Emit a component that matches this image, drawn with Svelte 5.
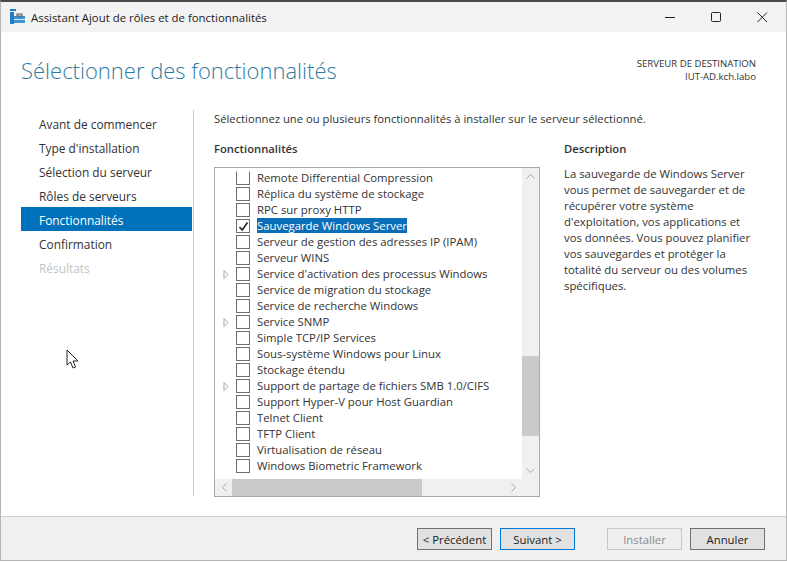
<script>
  const steps = [
    { label: "Avant de commencer" },
    { label: "Type d'installation" },
    { label: "Sélection du serveur" },
    { label: "Rôles de serveurs" },
    { label: "Fonctionnalités", active: true },
    { label: "Confirmation" },
    { label: "Résultats", disabled: true }
  ];
  const features = [
    { name: "Remote Differential Compression" },
    { name: "Réplica du système de stockage" },
    { name: "RPC sur proxy HTTP" },
    { name: "Sauvegarde Windows Server", checked: true, selected: true },
    { name: "Serveur de gestion des adresses IP (IPAM)" },
    { name: "Serveur WINS" },
    { name: "Service d'activation des processus Windows", expand: true },
    { name: "Service de migration du stockage" },
    { name: "Service de recherche Windows" },
    { name: "Service SNMP", expand: true },
    { name: "Simple TCP/IP Services" },
    { name: "Sous-système Windows pour Linux" },
    { name: "Stockage étendu" },
    { name: "Support de partage de fichiers SMB 1.0/CIFS", expand: true },
    { name: "Support Hyper-V pour Host Guardian" },
    { name: "Telnet Client" },
    { name: "TFTP Client" },
    { name: "Virtualisation de réseau" },
    { name: "Windows Biometric Framework" }
  ];
</script>

<div class="window">
  <header class="titlebar">
    <svg class="app-icon" width="16" height="16" viewBox="0 0 16 16">
      <rect x="0" y="0" width="6" height="2" fill="#1f7fc4" />
      <rect x="0" y="3" width="4" height="12" fill="#1f7fc4" />
      <rect x="4" y="7" width="11" height="7" fill="#3d94cf" />
      <rect x="7" y="5" width="5" height="2" fill="none" stroke="#4a5a68" />
      <rect x="4" y="10" width="11" height="1" fill="#d8e8f2" />
    </svg>
    <span class="title">Assistant Ajout de rôles et de fonctionnalités</span>
    <div class="controls">
      <svg width="11" height="11" viewBox="0 0 11 11"><path d="M0 5.5H10" stroke="#222" fill="none" /></svg>
      <svg width="11" height="11" viewBox="0 0 11 11"><rect x="0.5" y="0.5" width="9" height="9" rx="1" stroke="#222" fill="none" /></svg>
      <svg width="11" height="11" viewBox="0 0 11 11"><path d="M0.5 0.5L10 10M10 0.5L0.5 10" stroke="#222" fill="none" /></svg>
    </div>
  </header>

  <div class="head">
    <h1>Sélectionner des fonctionnalités</h1>
    <div class="dest">
      <div>SERVEUR DE DESTINATION</div>
      <div>IUT-AD.kch.labo</div>
    </div>
  </div>

  <div class="body">
    <nav class="steps">
      {#each steps as s}
        <div class="step" class:active={s.active} class:disabled={s.disabled}>{s.label}</div>
      {/each}
    </nav>
    <main class="content">
      <p class="intro">Sélectionnez une ou plusieurs fonctionnalités à installer sur le serveur sélectionné.</p>
      <div class="columns">
        <section class="left">
          <h2>Fonctionnalités</h2>
          <div class="listbox">
            <div class="list-row">
              <div class="items">
                {#each features as f, i}
                  <div class="item" class:first={i === 0}>
                    <span class="arrow">
                      {#if f.expand}
                        <svg width="7" height="9" viewBox="0 0 7 9"><path d="M2 .5L6 4.5L2 8.5Z" fill="none" stroke="#a6a6a6" /></svg>
                      {/if}
                    </span>
                    <span class="check">
                      {#if f.checked}
                        <svg width="11" height="11" viewBox="0 0 11 11"><path d="M1.5 6L4.2 9L9.5 1.5" fill="none" stroke="#222" stroke-width="1.6" /></svg>
                      {/if}
                    </span>
                    <span class="name" class:selected={f.selected}>{f.name}</span>
                  </div>
                {/each}
              </div>
              <div class="vscroll">
                <svg class="up" width="9" height="5" viewBox="0 0 9 5"><path d="M.5 4.5L4.5 .5L8.5 4.5" fill="none" stroke="#a8a8a8" /></svg>
                <div class="vthumb"></div>
                <svg class="down" width="9" height="5" viewBox="0 0 9 5"><path d="M.5 .5L4.5 4.5L8.5 .5" fill="none" stroke="#a8a8a8" /></svg>
              </div>
            </div>
            <div class="hscroll">
              <svg width="5" height="9" viewBox="0 0 5 9"><path d="M4.5 .5L.5 4.5L4.5 8.5" fill="none" stroke="#a8a8a8" /></svg>
              <div class="htrack"><div class="hthumb"></div></div>
              <svg width="5" height="9" viewBox="0 0 5 9"><path d="M.5 .5L4.5 4.5L.5 8.5" fill="none" stroke="#a8a8a8" /></svg>
            </div>
          </div>
        </section>
        <aside class="desc">
          <h2>Description</h2>
          <p>La sauvegarde de Windows Server vous permet de sauvegarder et de récupérer votre système d'exploitation, vos applications et vos données. Vous pouvez planifier vos sauvegardes et protéger la totalité du serveur ou des volumes spécifiques.</p>
        </aside>
      </div>
    </main>
  </div>

  <footer class="footer">
    <button class="dark">&lt; Précédent</button>
    <button class="primary">Suivant &gt;</button>
    <button class="off" disabled>Installer</button>
    <button class="dark">Annuler</button>
  </footer>
</div>

<!-- mouse pointer caught in the capture -->
<svg class="cursor" width="14" height="21" viewBox="0 0 14 21">
  <path d="M1 1V16L4.5 13L7 19L9.5 18L7 12H12Z" fill="#fff" stroke="#222" stroke-width="1" />
</svg>

<style>
  :global(body) {
    margin: 0;
    background: #fff;
  }
  .window {
    width: 787px;
    height: 561px;
    box-sizing: border-box;
    border-top: 2px solid #4a4a4a;
    border-left: 1px solid #b5b5b5;
    border-right: 1px solid #b5b5b5;
    border-bottom: 1px solid #b5b5b5;
    background: #fff;
    display: flex;
    flex-direction: column;
    font-family: "Open Sans", "Noto Sans", sans-serif;
    font-size: 11.35px;
    color: #333;
    overflow: hidden;
  }
  .titlebar {
    height: 30px;
    background: #f3f3f3;
    display: flex;
    align-items: center;
    padding-left: 9px;
    flex: none;
  }
  .title {
    margin-left: 5px;
    color: #222;
    font-size: 11.4px;
  }
  .controls {
    margin-left: auto;
    display: flex;
    gap: 35px;
    padding-right: 18px;
  }
  .head {
    height: 78px;
    flex: none;
    display: flex;
    justify-content: space-between;
    padding: 0 30px 0 20px;
  }
  h1 {
    margin: 23px 0 0;
    font-weight: 300;
    font-size: 22px;
    line-height: 30px;
    color: #2e7d9f;
  }
  .dest {
    margin-top: 25px;
    text-align: right;
    font-size: 9.6px;
    line-height: 13px;
    color: #333;
  }
  .body {
    flex: 1;
    display: flex;
    min-height: 0;
  }
  .steps {
    width: 171px;
    margin-left: 20px;
    padding-top: 1px;
    margin-right: 1px;
    flex: none;
    font-size: 11.9px;
  }
  .step {
    height: 24px;
    line-height: 26px;
    padding-left: 18px;
  }
  .step.active {
    background: #0072bc;
    color: #fff;
  }
  .step.disabled {
    color: #c4c4c4;
  }
  .content {
    flex: 1;
    border-left: 1px solid #c8c8c8;
    height: 386px;
    padding-left: 20px;
  }
  .intro {
    margin: 0;
    line-height: 18px;
    font-size: 11.25px;
  }
  .columns {
    display: flex;
    margin-top: 12px;
  }
  h2 {
    margin: 0;
    font-size: 11.25px;
    font-weight: 600;
    line-height: 18px;
    color: #333;
  }
  .left {
    width: 326px;
    flex: none;
  }
  .listbox {
    margin-top: 9px;
    width: 326px;
    height: 330px;
    box-sizing: border-box;
    border: 1px solid #a9a9a9;
    display: flex;
    flex-direction: column;
  }
  .list-row {
    flex: 1;
    display: flex;
    min-height: 0;
  }
  .items {
    flex: 1;
    overflow: hidden;
    padding-top: 2px;
  }
  .item {
    height: 16px;
    display: flex;
    align-items: center;
    padding-left: 7px;
    white-space: nowrap;
  }
  .arrow {
    width: 14px;
    display: flex;
    flex: none;
  }
  .check {
    width: 12px;
    height: 12px;
    border: 1px solid #6f6f6f;
    box-sizing: content-box;
    display: flex;
    align-items: center;
    justify-content: center;
    flex: none;
  }
  .item.first .check {
    border-top-color: transparent;
  }
  .name {
    margin-left: 7px;
    align-self: flex-start;
    height: 15px;
    line-height: 15px;
    color: #333;
  }
  .name.selected {
    background: #0a6fb8;
    color: #fff;
  }
  .vscroll {
    width: 17px;
    flex: none;
    background: #f0f0f0;
    position: relative;
    display: flex;
    flex-direction: column;
    align-items: center;
  }
  .vscroll .up {
    margin-top: 6px;
  }
  .vthumb {
    position: absolute;
    left: 0;
    right: 0;
    top: 188px;
    height: 80px;
    background: #cacaca;
  }
  .vscroll .down {
    margin-top: auto;
    margin-bottom: 6px;
  }
  .hscroll {
    height: 17px;
    flex: none;
    background: #f0f0f0;
    display: flex;
    align-items: center;
    padding: 0 23px 0 7px;
    gap: 5px;
  }
  .htrack {
    flex: 1;
    align-self: stretch;
  }
  .hthumb {
    width: 190px;
    height: 100%;
    background: #cacaca;
  }
  .desc {
    margin-left: 24px;
    width: 192px;
  }
  .desc p {
    margin: 8px 0 0;
    line-height: 16px;
  }
  .footer {
    height: 43px;
    margin-top: auto;
    flex: none;
    background: #f0f0f0;
    border-top: 1px solid #d0d0d0;
    display: flex;
    align-items: center;
    padding: 0 21px 0 416px;
  }
  button {
    width: 75px;
    height: 22px;
    box-sizing: border-box;
    font: inherit;
    color: #222;
    background: #e1e1e1;
    padding: 1px 0 0;
    margin-right: 8px;
  }
  .dark {
    border: 1px solid #707070;
  }
  .primary {
    border: 1px solid #0078d7;
    margin-right: 32px;
  }
  .off {
    background: #efefef;
    border: 1px solid #c8c8c8;
    color: #8a8a8a;
    margin-right: 8px;
  }
  button:last-child {
    margin-right: 0;
  }
  .cursor {
    position: absolute;
    left: 66px;
    top: 349px;
  }
</style>
